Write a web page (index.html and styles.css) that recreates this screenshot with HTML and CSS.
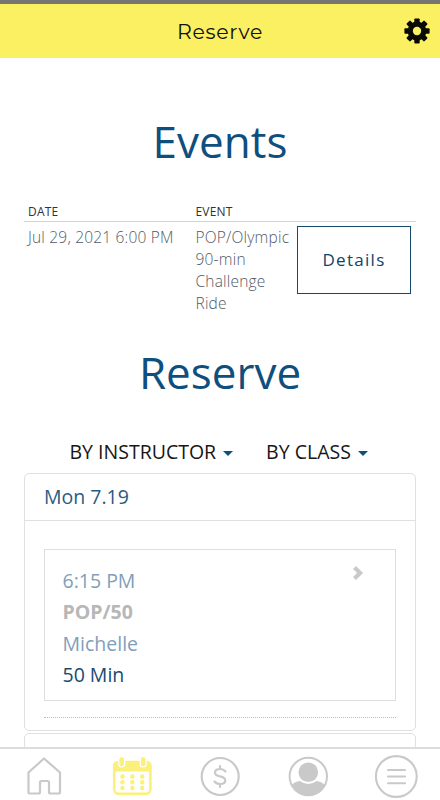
FILE: index.html
```html
<!doctype html>
<html>
<head>
<meta charset="utf-8">
<meta name="viewport" content="width=device-width, initial-scale=1">
<title>Reserve</title>
<link rel="stylesheet" href="styles.css">
</head>
<body>
<div class="status"></div>
<header class="topbar">
	<span class="title">Reserve</span>
	<svg class="gear" viewBox="-13 -13 26 26">
		<g fill="#0a0a05">
			<rect x="-2.7" y="-12.6" width="5.4" height="25.2" rx="1"/>
			<rect x="-2.7" y="-12.6" width="5.4" height="25.2" rx="1" transform="rotate(45)"/>
			<rect x="-2.7" y="-12.6" width="5.4" height="25.2" rx="1" transform="rotate(90)"/>
			<rect x="-2.7" y="-12.6" width="5.4" height="25.2" rx="1" transform="rotate(135)"/>
			<circle r="9.4"/>
		</g>
		<circle r="4.2" fill="#fbf062"/>
	</svg>
</header>

<main class="content">
	<h1 class="heading events">Events</h1>
	<div class="table">
		<div class="row head">
			<span>DATE</span>
			<span>EVENT</span>
		</div>
		<div class="row">
			<span class="date">Jul 29, 2021 6:00 PM</span>
			<span class="name">POP/Olympic 90-min Challenge Ride</span>
			<a class="details">Details</a>
		</div>
	</div>

	<h1 class="heading reserve">Reserve</h1>
	<div class="filters">
		<span class="filter instructor">BY INSTRUCTOR</span>
		<span class="filter class">BY CLASS</span>
	</div>

	<div class="panel">
		<div class="day">Mon 7.19</div>
		<div class="classes">
			<div class="card">
				<div class="info">
					<div class="light time">6:15 PM</div>
					<div class="type">POP/50</div>
					<div class="light teacher">Michelle</div>
					<div class="length">50 Min</div>
				</div>
				<svg class="arrow" viewBox="0 0 12 16"><path d="M2.500 2.400L8.100 8L2.500 13.600" fill="none" stroke="#c9c9c9" stroke-width="4.200"/></svg>
			</div>
		</div>
	</div>
	<div class="panel next"></div>
</main>

<nav class="tabs">
	<svg viewBox="0 0 44 44">
		<path d="M6.500 18.500L22 4.500L38 18.500V38Q38 39.500 36.500 39.500H28.500Q27 39.500 27 38V28.500Q27 27 25.500 27H19.500Q18 27 18 28.500V38Q18 39.500 16.500 39.500H8Q6.500 39.500 6.500 38Z" fill="none" stroke="#c9c9c9" stroke-width="2.200" stroke-linejoin="round"/>
	</svg>
	<svg viewBox="0 0 44 44">
		<rect x="4.200" y="8" width="36.200" height="31.800" rx="4.500" fill="#fff" stroke="#fbf07c" stroke-width="2.600"/>
		<path d="M3 17.500V12Q3 7 8 7H36.600Q41.600 7 41.600 12V17.500Z" fill="#fbf07c"/>
		<g fill="#fbf07c" stroke="#fff" stroke-width="1.200">
			<rect x="8.700" y="2.600" width="6" height="10.400" rx="3"/>
			<rect x="30.200" y="2.600" width="6" height="10.400" rx="3"/>
		</g>
		<g fill="#fbf07c">
			<circle cx="12.500" cy="22.500" r="2.200"/><circle cx="22.300" cy="22.500" r="2.200"/><circle cx="32.200" cy="22.500" r="2.200"/>
			<circle cx="12.500" cy="28.300" r="2.200"/><circle cx="22.300" cy="28.300" r="2.200"/><circle cx="32.200" cy="28.300" r="2.200"/>
			<circle cx="12.500" cy="34" r="2.200"/><circle cx="22.300" cy="34" r="2.200"/><circle cx="32.200" cy="34" r="2.200"/>
		</g>
	</svg>
	<svg viewBox="0 0 44 44" fill="none" stroke="#c9c9c9" stroke-width="2.200" stroke-linecap="round">
		<circle cx="22.200" cy="22.500" r="18.500"/>
		<path d="M27.500 17.500Q25.500 15 22 15Q17 15 17 18.600Q17 21.500 22 22.400Q27.300 23.400 27.300 26.600Q27.300 30 22 30Q18.500 30 16.500 27.500M22 12V15M22 30V33"/>
	</svg>
	<svg viewBox="0 0 44 44">
		<circle cx="22.300" cy="22.500" r="18.700" fill="#fff" stroke="#c9c9c9" stroke-width="2"/>
		<circle cx="22.300" cy="18.300" r="9.800" fill="#c9c9c9"/>
		<path d="M5.500 31Q9 27.500 14 27Q22.300 33 30.600 27Q35.500 27.500 39.100 31Q34 41.600 22.300 41.600Q10.500 41.600 5.500 31Z" fill="#c9c9c9"/>
	</svg>
	<svg viewBox="0 0 44 44" fill="none" stroke="#c9c9c9" stroke-width="2.100" stroke-linecap="round">
		<circle cx="22.300" cy="22.500" r="20.400"/>
		<path d="M14 16H31M14 22.500H31M14 29.300H31"/>
	</svg>
</nav>
</body>
</html>
```
FILE: styles.css
```css
*{
	box-sizing: border-box;
}
body{
	margin:0px;
	height:800px;
	display: flex;
	flex-direction: column;
	overflow: hidden;
	background:#fff;
	font-family: "Open Sans", sans-serif;
}
.status{
	height:4px;
	flex:none;
	background:#747470;
}
.topbar{
	height:54px;
	flex:none;
	display: grid;
	grid-template-columns: 40px 1fr 40px;
	align-items: center;
	background:#fbf062;
}
.title{
	grid-column: 2;
	padding-top:1px;
	text-align: center;
	font-family: Montserrat, Inter, sans-serif;
	font-size:20.500px;
	font-weight:450;
	letter-spacing: 0.7px;
	color:#111;
}
.gear{
	width:26px;
	height:26px;
	margin-left:4px;
}

.content{
	flex:1;
	min-height:0;
	overflow: hidden;
	padding:53px 24px 0;
}
.heading{
	margin:0;
	line-height:60px;
	font-size:44px;
	font-weight:400;
	text-align: center;
	color:#0e4f7e;
}
.table{
	margin-top:30px;
	height:141px;
}
.row{
	display: grid;
	grid-template-columns: 167.5px 101.5px 114px;
	padding:4px 0 0 4px;
	font-size:15.5px;
	font-weight:300;
	line-height:22px;
	letter-spacing: 0.2px;
	color:#525963;
}
.head{
	padding-top:0;
	height:21px;
	line-height:21px;
	font-size:12px;
	font-weight:400;
	color:#333;
	border-bottom:1px solid #d3d3d3;
}
.details{
	height:68px;
	line-height:66px;
	border:1px solid #16486a;
	text-align: center;
	font-size:17px;
	font-weight:400;
	letter-spacing: 1.3px;
	color:#0e4468;
}

.reserve{
	margin-top:0;
}
.filters{
	display: flex;
	gap:33px;
	height:71px;
	padding:35px 0 6px 45.500px;
	line-height:30px;
	font-size:19.500px;
	color:#161616;
}
.filter{
	display: flex;
	align-items: center;
	gap:7px;
}
.filter:after{
	content:"";
	margin-top:3px;
	border:5px solid transparent;
	border-top-color:#0e4f7e;
	border-bottom:0;
}

.panel{
	height:258px;
	border:1px solid #e0e0e0;
	border-radius: 5px;
}
.next{
	margin-top:2px;
}
.day{
	height:47px;
	padding-left:19px;
	line-height:46px;
	font-size:19.500px;
	color:#2a5c84;
	border-bottom:1px solid #e0e0e0;
}
.classes{
	margin:28px 19px 0 19px;
	padding-bottom:16px;
	border-bottom:1px dotted #bdbdbd;
}
.card{
	display: flex;
	justify-content: space-between;
	height:152px;
	padding:15px 31px 0 17.500px;
	border:1px solid #dedede;
	line-height:31.400px;
	font-size:19.500px;
}
.light{
	color:#809fba;
}
.type{
	font-weight:700;
	color:#b7b7b7;
}
.length{
	color:#174a73;
}
.arrow{
	width:12px;
	height:16px;
}

.tabs{
	flex:none;
	height:53px;
	display: flex;
	justify-content: space-around;
	padding-top:5px;
	border-top:2px solid #dcdcdc;
	background:#fff;
}
.tabs svg{
	width:44px;
	height:44px;
}
```
